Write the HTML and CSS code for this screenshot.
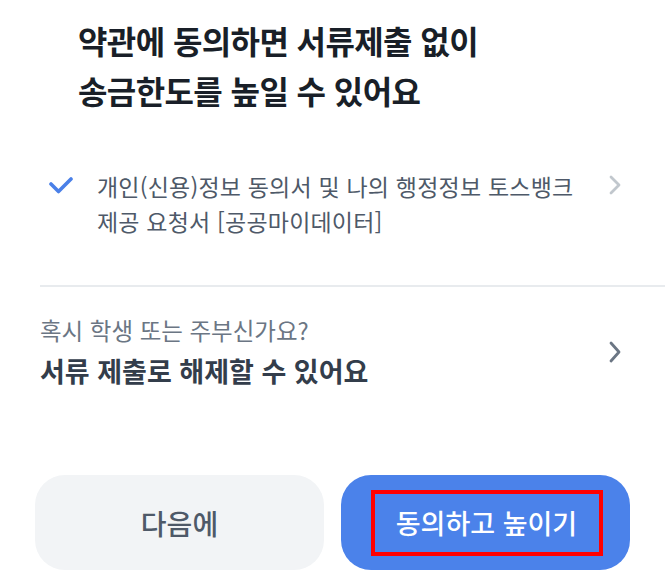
FILE: index.html
```html
<!DOCTYPE html>
<html lang="ko">
<head>
<meta charset="utf-8">
<link rel="stylesheet" href="styles.css">
</head>
<body>
<div class="page">
  <h1 class="title">약관에 동의하면 서류제출 없이<br>송금한도를 높일 수 있어요</h1>

  <div class="agree">
    <svg class="check" width="26" height="20" viewBox="0 0 26 20"><polyline points="3,7 10.5,14.5 23,2" fill="none" stroke="#4a80e8" stroke-width="3.6" stroke-linecap="round" stroke-linejoin="round"/></svg>
    <p class="agree-text">개인(신용)정보 동의서 및 나의 행정정보 토스뱅크<br>제공 요청서 [공공마이데이터]</p>
    <svg class="chev light" width="14" height="20" viewBox="0 0 14 20"><polyline points="3,2 11,10 3,18" fill="none" stroke="#c1c7cd" stroke-width="2.8" stroke-linecap="round" stroke-linejoin="round"/></svg>
  </div>

  <div class="divider"></div>

  <div class="release">
    <div class="release-text">
      <p class="q">혹시 학생 또는 주부신가요?</p>
      <p class="a">서류 제출로 해제할 수 있어요</p>
    </div>
    <svg class="chev dark" width="14" height="22" viewBox="0 0 14 22"><polyline points="3,2 11,11 3,20" fill="none" stroke="#6b7684" stroke-width="2.8" stroke-linecap="round" stroke-linejoin="round"/></svg>
  </div>

  <div class="buttons">
    <button class="btn secondary">다음에</button>
    <button class="btn primary"><span class="hl">동의하고 높이기</span></button>
  </div>
</div>
</body>
</html>
```

FILE: styles.css
```css
* { box-sizing: border-box; }
html, body {
  margin: 0;
  padding: 0;
  background: #ffffff;
}
body {
  font-family: "Noto Sans CJK KR", "Noto Sans", sans-serif;
  width: 665px;
  height: 586px;
  overflow: hidden;
}
.page {
  display: flex;
  flex-direction: column;
}
.title {
  margin: 0;
  padding: 15px 0 0 78px;
  font-size: 32px;
  line-height: 50px;
  font-weight: 700;
  color: #191f28;
  letter-spacing: -0.6px;
}
.agree {
  display: flex;
  align-items: flex-start;
  margin-top: 54px;
  padding-left: 48px;
}
.check {
  margin-top: 8px;
  flex: none;
}
.agree-text {
  margin: 0 0 0 23px;
  font-size: 23px;
  line-height: 35px;
  color: #4e5968;
  letter-spacing: 0.2px;
  flex: 1;
}
.chev.light {
  margin: 6px 43px 0 0;
  flex: none;
}
.divider {
  margin: 46px 0 0 40px;
  height: 2px;
  background: #e8ebee;
}
.release {
  display: flex;
  align-items: center;
  padding: 26px 43px 0 40px;
}
.release-text { flex: 1; }
.q {
  margin: 0;
  font-size: 23.5px;
  line-height: 34px;
  color: #6b7684;
  letter-spacing: 0;
}
.a {
  margin: 5px 0 0;
  font-size: 27px;
  line-height: 38px;
  font-weight: 700;
  color: #333d4b;
  letter-spacing: 0;
}
.chev.dark { flex: none; }
.buttons {
  display: flex;
  gap: 17px;
  margin-top: 85px;
  padding: 0 35px;
}
.btn {
  flex: 1;
  height: 95px;
  border: none;
  border-radius: 30px;
  font-family: inherit;
  font-size: 27px;
  font-weight: 500;
  letter-spacing: 0;
  display: flex;
  align-items: center;
  justify-content: center;
  padding: 0;
}
.secondary {
  background: #f2f4f6;
  color: #4e5968;
  font-size: 28px;
}
.primary {
  background: #4b82ea;
  color: #ffffff;
}
.hl {
  display: flex;
  align-items: center;
  justify-content: center;
  width: 232px;
  height: 66px;
  border: 4px solid #ff0000;
  margin-left: 2px;
}
```
